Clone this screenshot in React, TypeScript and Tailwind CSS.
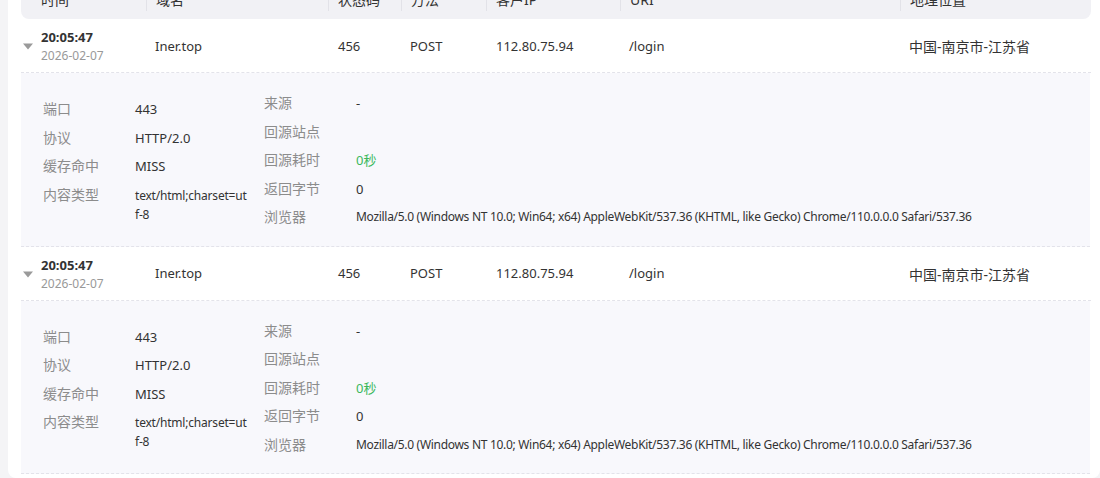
import { useState } from 'react';

const cols = 'grid grid-cols-[125px_182px_73px_85px_134px_280px_191px]';

const headers = ['时间', '域名', '状态码', '方法', '客户IP', 'URI', '地理位置'];

const logs = [
  {
    id: 1,
    time: '20:05:47',
    date: '2026-02-07',
    domain: 'Iner.top',
    status: '456',
    method: 'POST',
    ip: '112.80.75.94',
    uri: '/login',
    geo: '中国-南京市-江苏省',
    port: '443',
    protocol: 'HTTP/2.0',
    cache: 'MISS',
    contentType: 'text/html;charset=utf-8',
    origin: '-',
    originSite: '',
    originTime: '0秒',
    bytes: '0',
    ua: 'Mozilla/5.0 (Windows NT 10.0; Win64; x64) AppleWebKit/537.36 (KHTML, like Gecko) Chrome/110.0.0.0 Safari/537.36',
  },
  {
    id: 2,
    time: '20:05:47',
    date: '2026-02-07',
    domain: 'Iner.top',
    status: '456',
    method: 'POST',
    ip: '112.80.75.94',
    uri: '/login',
    geo: '中国-南京市-江苏省',
    port: '443',
    protocol: 'HTTP/2.0',
    cache: 'MISS',
    contentType: 'text/html;charset=utf-8',
    origin: '-',
    originSite: '',
    originTime: '0秒',
    bytes: '0',
    ua: 'Mozilla/5.0 (Windows NT 10.0; Win64; x64) AppleWebKit/537.36 (KHTML, like Gecko) Chrome/110.0.0.0 Safari/537.36',
  },
];

function Caret() {
  return (
    <svg width="10" height="7" viewBox="0 0 10 7" className="shrink-0">
      <path d="M0 0.5 L10 0.5 L5 6.5 Z" fill="#9a9a9a" />
    </svg>
  );
}

function Field({ label, children }: { label: string; children: React.ReactNode }) {
  return (
    <div className="flex min-h-[28.5px]">
      <div className="w-[92px] shrink-0 text-[14px] leading-[28.5px] text-[#8c8c8c]">{label}</div>
      {children}
    </div>
  );
}

export default function App() {
  const [open] = useState<number[]>([1, 2]);

  return (
    <div className="h-[478px] overflow-hidden bg-[#f4f4f6] pl-2 font-['Noto_Sans','Noto_Sans_CJK_SC',sans-serif] text-[13px] text-[#333]">
      <div className="-mt-[21px] rounded-lg bg-white pl-[13px] pr-[9px] pb-[4px]">
        {/* 表头 */}
        <div className={`${cols} h-10 items-center rounded-b-lg bg-[#f1f1f5] text-[14px] text-[#333]`}>
          {headers.map((h, i) => (
            <div key={h} className={`flex items-center ${i === 0 ? 'pl-5' : ''}`}>
              {i > 0 && <span className="mr-[9px] h-6 w-px bg-[#e2e2e8]" />}
              {h}
            </div>
          ))}
        </div>

        {logs.map(log => (
          <div key={log.id}>
            <div className={`${cols} h-[54px] items-center border-b border-dashed border-[#e3e3ea] pt-[2px]`}>
              <div className="flex items-center">
                <div className="w-5 pl-[2px]">
                  <Caret />
                </div>
                <div className="flex flex-col">
                  <span className="font-bold leading-[18px]">{log.time}</span>
                  <span className="text-[12px] leading-[19px] text-[#999]">{log.date}</span>
                </div>
              </div>
              <div className="pl-[9px]">{log.domain}</div>
              <div className="pl-[10px]">{log.status}</div>
              <div className="pl-[9px]">{log.method}</div>
              <div className="pl-[10px]">{log.ip}</div>
              <div className="pl-[9px]">{log.uri}</div>
              <div className="pl-[9px] text-[14px]">{log.geo}</div>
            </div>

            {open.includes(log.id) && (
              <div className="mr-px flex border-b border-dashed border-[#e3e3ea] bg-[#f8f8fc] pl-[22px] pt-[16px] pb-[14px]">
                <div className="w-[221px] shrink-0 pt-[6px]">
                  <Field label="端口">
                    <span className="leading-[28.5px]">{log.port}</span>
                  </Field>
                  <Field label="协议">
                    <span className="leading-[28.5px]">{log.protocol}</span>
                  </Field>
                  <Field label="缓存命中">
                    <span className="leading-[28.5px]">{log.cache}</span>
                  </Field>
                  <Field label="内容类型">
                    <span className="w-[113px] break-all pt-[5px] text-[12px] leading-[19px] tracking-[-0.2px]">{log.contentType}</span>
                  </Field>
                </div>
                <div className="flex-1">
                  <Field label="来源">
                    <span className="leading-[28.5px]">{log.origin}</span>
                  </Field>
                  <Field label="回源站点">
                    <span className="leading-[28.5px]">{log.originSite}</span>
                  </Field>
                  <Field label="回源耗时">
                    <span className="leading-[28.5px] text-[#3cb85c]">{log.originTime}</span>
                  </Field>
                  <Field label="返回字节">
                    <span className="leading-[28.5px]">{log.bytes}</span>
                  </Field>
                  <Field label="浏览器">
                    <span className="text-[12px] leading-[28.5px] tracking-[-0.3px]">{log.ua}</span>
                  </Field>
                </div>
              </div>
            )}
          </div>
        ))}
      </div>
    </div>
  );
}
